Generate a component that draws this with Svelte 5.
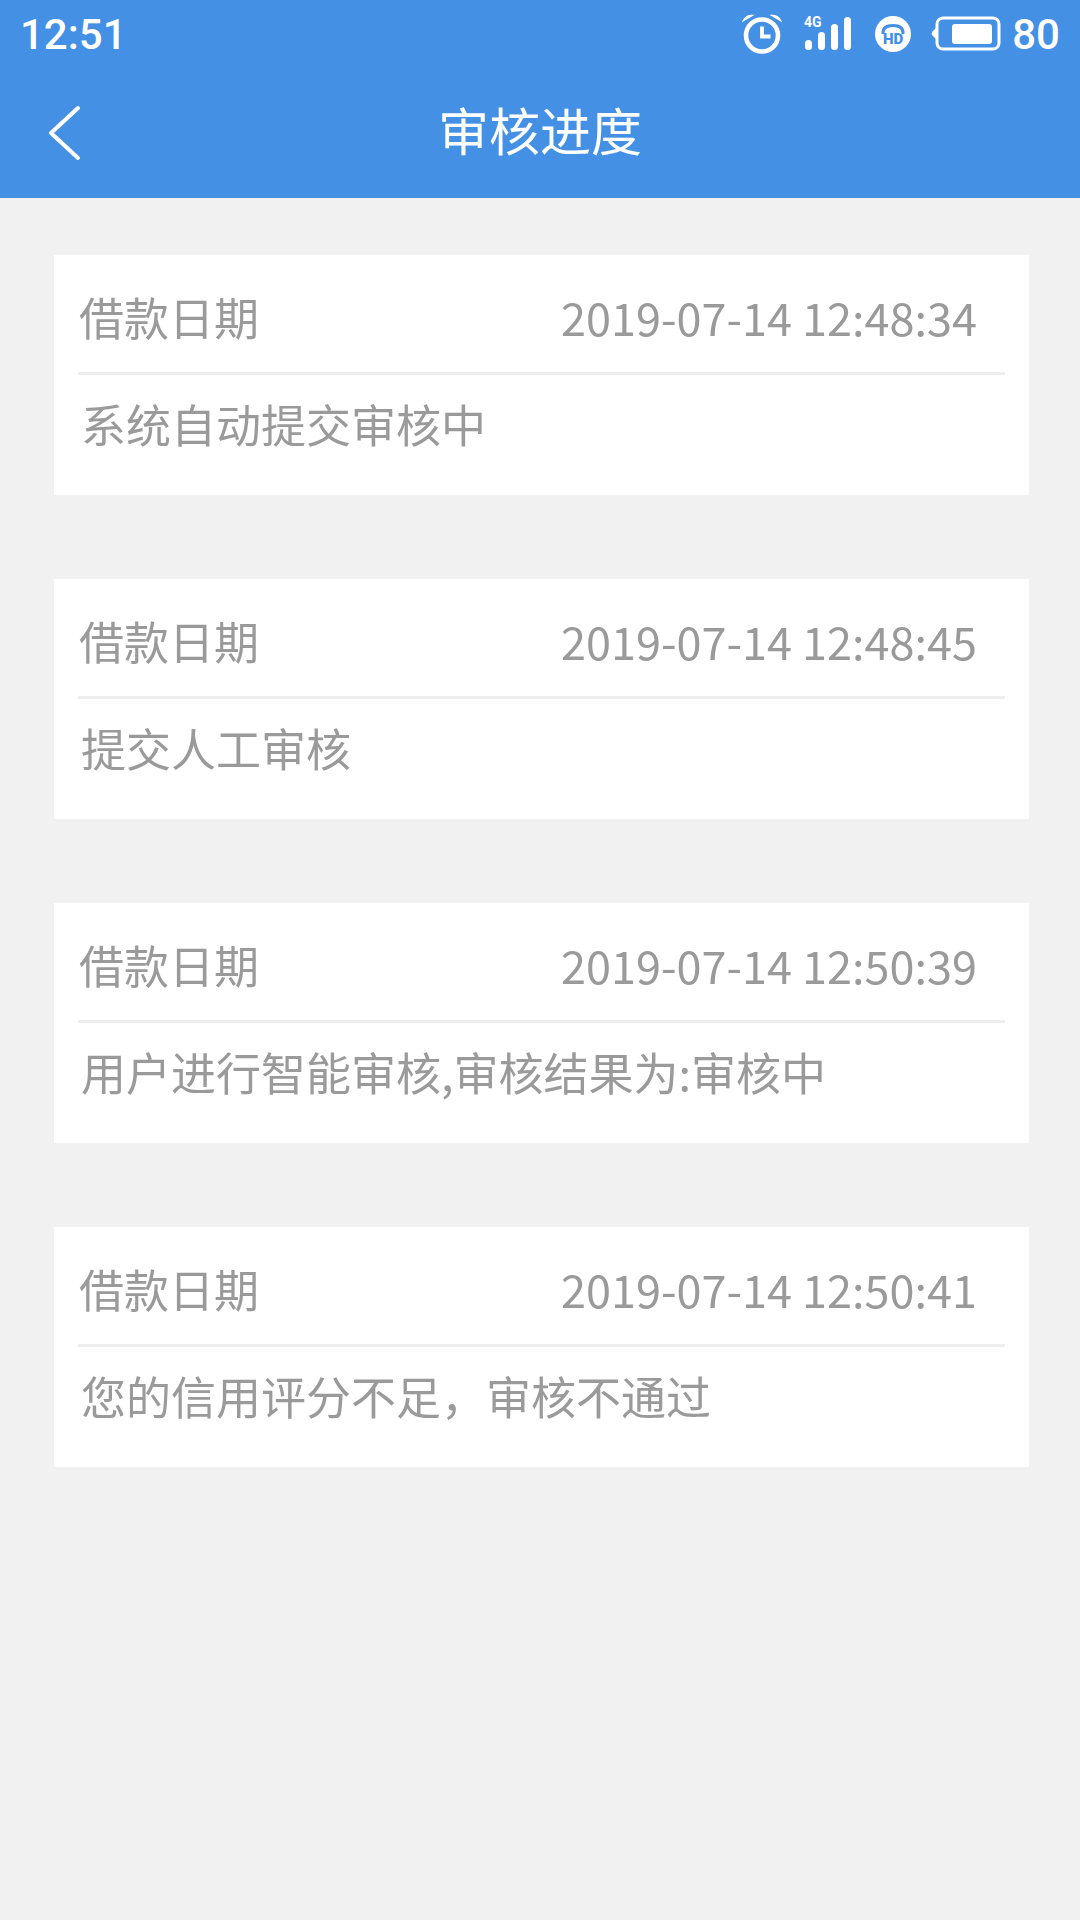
<script>
  const items = [
    { date: '2019-07-14 12:48:34', text: '系统自动提交审核中' },
    { date: '2019-07-14 12:48:45', text: '提交人工审核' },
    { date: '2019-07-14 12:50:39', text: '用户进行智能审核,审核结果为:审核中' },
    { date: '2019-07-14 12:50:41', text: '您的信用评分不足，审核不通过' }
  ];
</script>

<div class="page">
  <header class="top">
    <div class="status">
      <span class="time">12:51</span>
      <div class="icons">
        <svg class="alarm" width="40" height="40" viewBox="0 0 40 40" fill="none" stroke="#fff">
          <circle cx="20" cy="21.5" r="16" stroke-width="4.6" />
          <path d="M20 12.5V22.5H28.5" stroke-width="3.8" />
          <path d="M1.5 6.5Q4 1.5 10 1.5Z M38.5 6.5Q36 1.5 30 1.5Z" fill="#fff" stroke-width="1.5" />
        </svg>
        <svg class="signal" width="48" height="40" viewBox="0 0 48 40" fill="#fff">
          <text x="0" y="13" font-family="Roboto" font-size="14" font-weight="700">4G</text>
          <rect x="1" y="26" width="7" height="10" rx="3.5" />
          <rect x="14" y="18" width="7" height="18" rx="3.5" />
          <rect x="27" y="10" width="7" height="26" rx="3.5" />
          <rect x="40" y="3" width="7" height="33" rx="3.5" />
        </svg>
        <svg class="hd" width="38" height="38" viewBox="0 0 38 38">
          <circle cx="19" cy="19" r="18" fill="#fff" />
          <path d="M9 19V18Q9 10.5 19 10.5Q29 10.5 29 18V19" fill="none" stroke="#4390e6" stroke-width="3" />
          <text x="19" y="29" text-anchor="middle" font-family="Roboto" font-size="15" font-weight="900" fill="#4390e6">HD</text>
        </svg>
        <svg class="battery" width="70" height="36" viewBox="0 0 70 36" fill="none">
          <rect x="6" y="2" width="62" height="31" rx="6" stroke="#fff" stroke-width="3" />
          <path d="M5 12L1.5 15.5Q0 17.5 1.5 19.5L5 23Z" fill="#fff" />
          <rect x="21" y="8" width="40" height="20" rx="3" fill="#fff" />
        </svg>
        <span class="level">80</span>
      </div>
    </div>
    <div class="nav">
      <svg class="back" width="36" height="58" viewBox="0 0 36 58" fill="none" stroke="#fff" stroke-width="4" stroke-linecap="round" stroke-linejoin="round">
        <path d="M32 3L5 28L32 53" />
      </svg>
      <h1>审核进度</h1>
    </div>
  </header>

  <main class="list">
    {#each items as item}
      <section class="card">
        <div class="row">
          <span class="label">借款日期</span>
          <span class="date">{item.date}</span>
        </div>
        <p>{item.text}</p>
      </section>
    {/each}
  </main>
</div>

<style>
  :global(body) {
    margin: 0;
  }
  .page {
    width: 1080px;
    height: 1920px;
    background: #f1f1f1;
    font-family: "Noto Sans CJK SC", "Noto Sans", sans-serif;
    overflow: hidden;
  }
  .top {
    height: 198px;
    background: #4390e5;
    color: #fff;
  }
  .status {
    height: 66px;
    padding: 2px 20px 0 20px;
    box-sizing: border-box;
    display: flex;
    align-items: center;
    justify-content: space-between;
    font-family: Roboto, sans-serif;
    font-weight: 500;
    font-size: 42px;
  }
  .icons {
    display: flex;
    align-items: center;
  }
  .icons svg {
    display: block;
  }
  .signal {
    margin-left: 22px;
  }
  .hd {
    margin-left: 22px;
  }
  .battery {
    margin-left: 19px;
  }
  .level {
    margin-left: 11px;
  }
  .nav {
    position: relative;
    height: 132px;
    display: flex;
    align-items: center;
    justify-content: center;
    padding-bottom: 5px;
    box-sizing: border-box;
  }
  .back {
    position: absolute;
    left: 46px;
    top: 39px;
  }
  h1 {
    margin: 0;
    font-size: 51px;
    font-weight: 400;
    line-height: 1;
  }
  .list {
    display: flex;
    flex-direction: column;
    gap: 84px;
    padding: 57px 51px 0 54px;
    color: #9a9a9a;
    font-size: 45px;
  }
  .card {
    height: 240px;
    background: #fff;
  }
  .row {
    height: 112px;
    margin: 0 24px;
    padding: 5px 28px 0 1px;
    border-bottom: 3px solid #eeeeee;
    display: flex;
    align-items: center;
    justify-content: space-between;
    line-height: 1;
  }
  .label,
  .date,
  p {
    will-change: transform;
  }
  p {
    margin: 0;
    padding: 0 0 24px 27px;
    height: 96px;
    display: flex;
    align-items: center;
    line-height: 1;
  }
</style>
